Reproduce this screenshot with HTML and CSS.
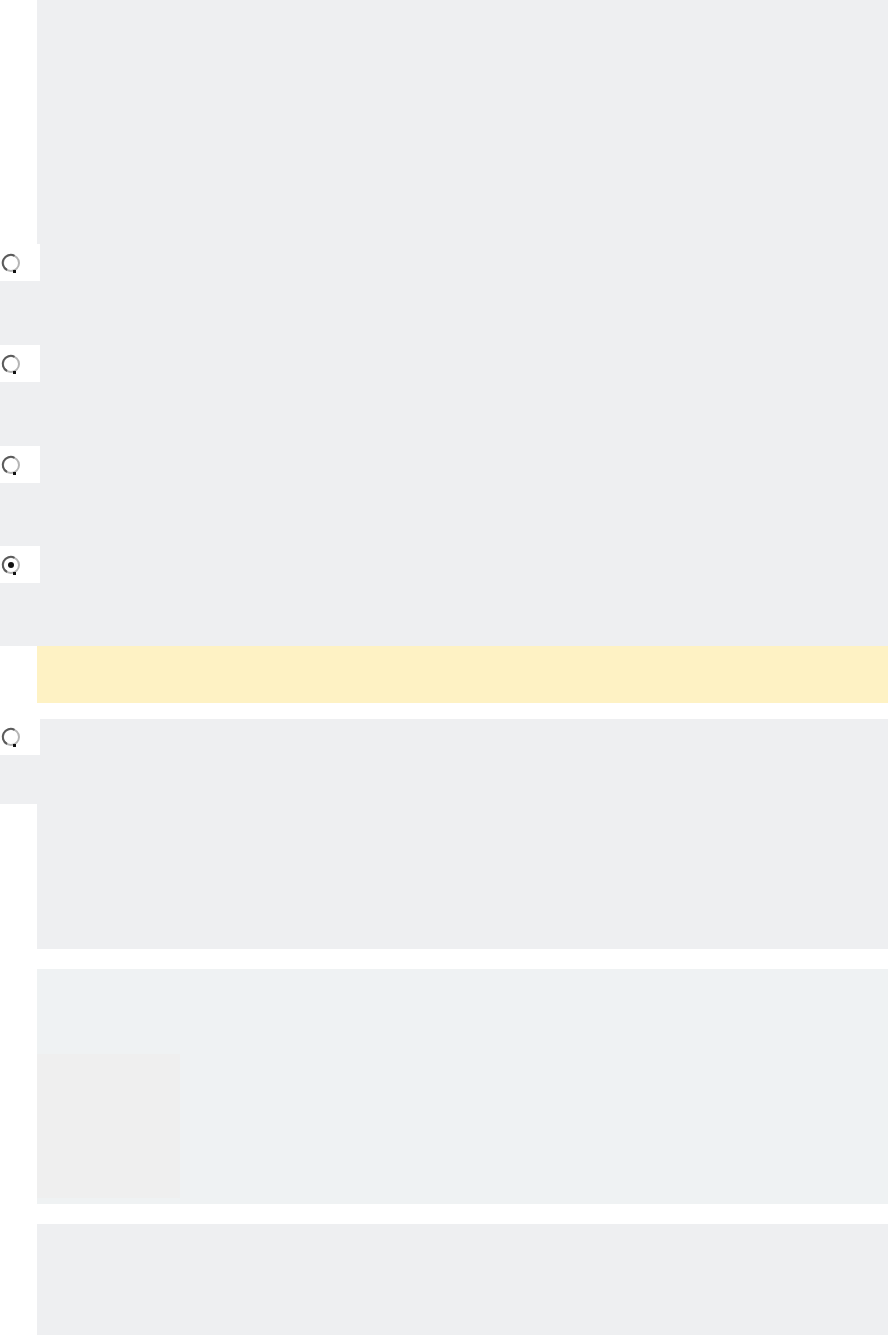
FILE: index.html
```html
<!DOCTYPE html>
<html lang="en">
<head>
<meta charset="utf-8">
<title>Options</title>
<link rel="stylesheet" href="styles.css">
</head>
<body>
<div class="page">
  <div class="top-block"></div>

  <div class="option">
    <div class="radio-box">
      <svg class="radio" viewBox="0 0 20 22" width="20" height="22"><circle cx="10" cy="11" r="8" fill="#fff" stroke="#b5b5b5" stroke-width="2"/><path d="M6 18 A8 8 0 0 1 13.5 3.8" fill="none" stroke="#5a5a5a" stroke-width="2"/><rect x="12" y="18" width="3" height="3" fill="#111"/></svg>
    </div>
  </div>
  <div class="option">
    <div class="radio-box">
      <svg class="radio" viewBox="0 0 20 22" width="20" height="22"><circle cx="10" cy="11" r="8" fill="#fff" stroke="#b5b5b5" stroke-width="2"/><path d="M6 18 A8 8 0 0 1 13.5 3.8" fill="none" stroke="#5a5a5a" stroke-width="2"/><rect x="12" y="18" width="3" height="3" fill="#111"/></svg>
    </div>
  </div>
  <div class="option">
    <div class="radio-box">
      <svg class="radio" viewBox="0 0 20 22" width="20" height="22"><circle cx="10" cy="11" r="8" fill="#fff" stroke="#b5b5b5" stroke-width="2"/><path d="M6 18 A8 8 0 0 1 13.5 3.8" fill="none" stroke="#5a5a5a" stroke-width="2"/><rect x="12" y="18" width="3" height="3" fill="#111"/></svg>
    </div>
  </div>
  <div class="option">
    <div class="radio-box">
      <svg class="radio" viewBox="0 0 20 22" width="20" height="22"><circle cx="10" cy="11" r="8" fill="#fff" stroke="#b5b5b5" stroke-width="2"/><path d="M6 18 A8 8 0 0 1 13.5 3.8" fill="none" stroke="#5a5a5a" stroke-width="2"/><circle cx="10" cy="11" r="3" fill="#111"/><rect x="12" y="18" width="3" height="3" fill="#111"/></svg>
    </div>
  </div>

  <div class="notice"></div>

  <div class="answer">
    <div class="answer-side">
      <div class="radio-box side-box">
        <svg class="radio" viewBox="0 0 20 22" width="20" height="22"><circle cx="10" cy="11" r="8" fill="#fff" stroke="#b5b5b5" stroke-width="2"/><path d="M6 18 A8 8 0 0 1 13.5 3.8" fill="none" stroke="#5a5a5a" stroke-width="2"/><rect x="12" y="18" width="3" height="3" fill="#111"/></svg>
      </div>
      <div class="side-fill"></div>
    </div>
    <div class="answer-main"></div>
  </div>

  <div class="media-block">
    <div class="thumb"></div>
  </div>

  <div class="bottom-block"></div>
</div>
</body>
</html>
```

FILE: styles.css
```css
html, body {
  margin: 0;
  padding: 0;
  background: #ffffff;
  font-family: "Liberation Sans", Arial, sans-serif;
}

.page {
  width: 888px;
  display: flex;
  flex-direction: column;
}

.top-block {
  margin-left: 37px;
  height: 244px;
  background: #eeeff1;
}

.option {
  height: 101px;
  background: #eeeff1;
  display: flex;
  align-items: flex-start;
}

.option:nth-of-type(4),
.option:nth-of-type(5) {
  height: 100px;
}

.radio-box {
  width: 40px;
  height: 37px;
  background: #ffffff;
  display: flex;
  align-items: center;
  padding-left: 1px;
  box-sizing: border-box;
}

.radio {
  display: block;
}

.notice {
  margin-left: 37px;
  height: 57px;
  background: #fef2c4;
}

.answer {
  margin-top: 16px;
  display: flex;
  height: 230px;
}

.answer-side {
  width: 37px;
  display: flex;
  flex-direction: column;
  position: relative;
  z-index: 1;
}

.side-box {
  height: 36px;
  flex-shrink: 0;
}

.side-fill {
  height: 49px;
  background: #eeeff1;
}

.answer-main {
  flex: 1;
  background: #eeeff1;
}

.media-block {
  margin-top: 20px;
  margin-left: 37px;
  height: 235px;
  background: #eff2f3;
  padding-top: 85px;
  box-sizing: border-box;
}

.thumb {
  width: 143px;
  height: 144px;
  background: #efefef;
}

.bottom-block {
  margin-top: 20px;
  margin-left: 37px;
  height: 111px;
  background: #eeeff1;
}
```
